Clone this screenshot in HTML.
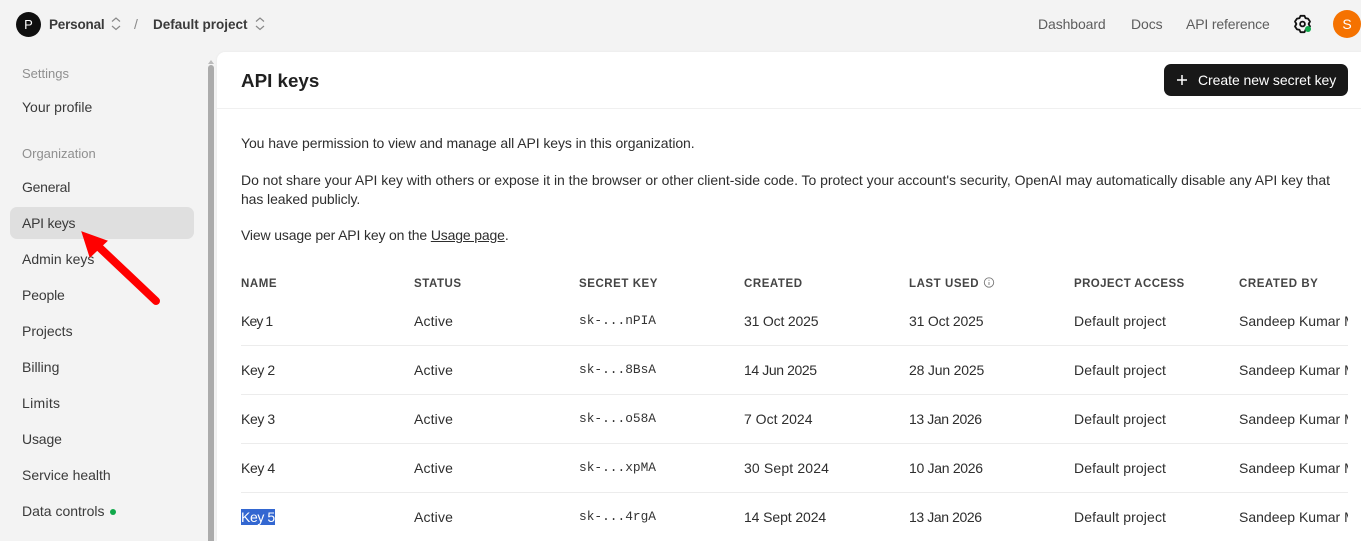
<!DOCTYPE html>
<html><head><meta charset="utf-8"><style>
*{box-sizing:border-box}
html,body{margin:0;padding:0;width:1361px;height:541px;overflow:hidden;background:#f3f3f3;font-family:"Liberation Sans",sans-serif;color:#2e2e2e;font-size:14px}
.t{position:absolute;white-space:nowrap;line-height:20px}
.side{color:#3a3a3a}
.mut{color:#8f8f8f}
.top{color:#5d5d5d}
.h{font-size:11.5px;font-weight:700;letter-spacing:.55px;color:#444}
.m{font-family:"Liberation Mono",monospace;font-size:12.83px;color:#333}
.d{letter-spacing:-.18px}
.p{letter-spacing:.12px}
.a{letter-spacing:.15px}
.k{letter-spacing:-.4px}
.s{left:1239px;width:109px;overflow:hidden}
.hr{position:absolute;left:241px;width:1107px;height:1px;background:#ececec}
</style></head><body>
<div style="position:absolute;left:16px;top:12px;width:25px;height:25px;border-radius:50%;background:#0f0f0f;color:#fff;font-size:13px;text-align:center;line-height:25px">P</div>
<div class="t" style="left:49px;top:15px;font-weight:700;color:#3a3a3a;font-size:13.5px;letter-spacing:-.2px">Personal</div>
<svg style="position:absolute;left:109px;top:15px" width="14" height="17" viewBox="0 0 14 17" fill="none" stroke="#888" stroke-width="1.2"><path d="M3 6.500 7 3l4 3.500M3 11 7 14.500 11 11"/></svg>
<div class="t" style="left:134px;top:14px;color:#888">/</div>
<div class="t" style="left:153px;top:15px;font-weight:700;color:#3a3a3a;font-size:13.5px">Default project</div>
<svg style="position:absolute;left:253px;top:15px" width="14" height="17" viewBox="0 0 14 17" fill="none" stroke="#888" stroke-width="1.2"><path d="M3 6.500 7 3l4 3.500M3 11 7 14.500 11 11"/></svg>
<div class="t top" style="left:1038px;top:14px;letter-spacing:-.1px">Dashboard</div>
<div class="t top" style="left:1131px;top:14px;letter-spacing:-.1px">Docs</div>
<div class="t top" style="left:1186px;top:14px;letter-spacing:-.15px">API reference</div>
<svg style="position:absolute;left:1293px;top:14px" width="20" height="20" viewBox="0 0 20 20" fill="none" stroke="#111" stroke-width="1.8"><path d="M7.500 1.800h4l1 2.400 2.500.4 2 2.900-1.400 2.500 1.400 2.500-2 2.900-2.500.4-1 2.400h-4l-1-2.400-2.500-.4-2-2.900 1.400-2.500-1.400-2.500 2-2.900 2.500-.4z" stroke-linejoin="round"/><circle cx="9.500" cy="10" r="2.400"/><circle cx="15" cy="15" r="3" fill="#10a84a" stroke="none"/></svg>
<div style="position:absolute;left:1333px;top:10px;width:28px;height:28px;border-radius:50%;background:#f57200;color:#fff;font-size:14px;text-align:center;line-height:28px">S</div>

<div class="t mut" style="left:22px;top:64px;font-size:13px">Settings</div>
<div class="t side" style="left:22px;top:97px">Your profile</div>
<div class="t mut" style="left:22px;top:144px;font-size:13px">Organization</div>
<div class="t side" style="left:22px;top:177px;letter-spacing:-.25px">General</div>
<div style="position:absolute;left:10px;top:207px;width:184px;height:32px;border-radius:7px;background:#dfdfdf"></div>
<div class="t side" style="left:22px;top:213px;letter-spacing:-.25px">API keys</div>
<div class="t side" style="left:22px;top:249px">Admin keys</div>
<div class="t side" style="left:22px;top:285px;letter-spacing:-.15px">People</div>
<div class="t side" style="left:22px;top:321px">Projects</div>
<div class="t side" style="left:22px;top:357px">Billing</div>
<div class="t side" style="left:22px;top:393px;letter-spacing:.3px">Limits</div>
<div class="t side" style="left:22px;top:429px;letter-spacing:-.15px">Usage</div>
<div class="t side" style="left:22px;top:465px">Service health</div>
<div class="t side" style="left:22px;top:501px">Data controls</div>
<div style="position:absolute;left:110px;top:509px;width:6px;height:6px;border-radius:50%;background:#10a84a"></div>

<div style="position:absolute;left:208px;top:65px;width:6px;height:476px;background:#ababab;border-radius:3px 3px 0 0"></div>
<div style="position:absolute;left:208px;top:57px;width:0;height:0;border:3px solid transparent;border-bottom:4px solid #bbb"></div>

<div style="position:absolute;left:217px;top:52px;width:1144px;height:489px;background:#fff;border-top-left-radius:8px;box-shadow:0 0 2px #e6e6e6"></div>
<div style="position:absolute;left:217px;top:108px;width:1144px;height:1px;background:#f0f0f0"></div>
<div class="t" style="left:241px;top:71px;font-size:18.8px;font-weight:700;color:#202020">API keys</div>
<div style="position:absolute;left:1164px;top:64px;width:184px;height:32px;border-radius:7px;background:#181818"></div>
<svg style="position:absolute;left:1174px;top:72px" width="16" height="16" viewBox="0 0 16 16" stroke="#fff" stroke-width="1.5"><path d="M8 3v10M3 8h10"/></svg>
<div class="t" style="left:1198px;top:70px;color:#fff;letter-spacing:-.05px">Create new secret key</div>

<div class="t" style="left:241px;top:133px;letter-spacing:-.08px">You have permission to view and manage all API keys in this organization.</div>
<div class="t" style="left:241px;top:170px;letter-spacing:-.028px">Do not share your API key with others or expose it in the browser or other client-side code. To protect your account's security, OpenAI may automatically disable any API key that</div>
<div class="t" style="left:241px;top:189px;letter-spacing:-.1px">has leaked publicly.</div>
<div class="t" style="left:241px;top:225px;letter-spacing:-.15px">View usage per API key on the <span style="text-decoration:underline">Usage page</span>.</div>

<div class="t h" style="left:241px;top:274px">NAME</div>
<div class="t h" style="left:414px;top:274px">STATUS</div>
<div class="t h" style="left:579px;top:274px">SECRET KEY</div>
<div class="t h" style="left:744px;top:274px">CREATED</div>
<div class="t h" style="left:909px;top:274px">LAST USED</div>
<svg style="position:absolute;left:983px;top:277px" width="12" height="11" viewBox="0 0 12 11" fill="none" stroke="#777" stroke-width=".9"><circle cx="6" cy="5.500" r="4.700"/><path d="M6 5v3M6 2.800v1"/></svg>
<div class="t h" style="left:1074px;top:274px;letter-spacing:.4px">PROJECT ACCESS</div>
<div class="t h" style="left:1239px;top:274px">CREATED BY</div>

<div class="t k" style="left:241px;top:311px;letter-spacing:-.9px">Key 1</div><div class="t a" style="left:414px;top:311px">Active</div><div class="t m" style="left:579px;top:311px">sk-...nPIA</div><div class="t d" style="left:744px;top:311px">31 Oct 2025</div><div class="t d" style="left:909px;top:311px">31 Oct 2025</div><div class="t p" style="left:1074px;top:311px">Default project</div><div class="t s" style="top:311px">Sandeep Kumar Mishra</div>
<div class="hr" style="top:345px"></div>
<div class="t k" style="left:241px;top:360px">Key 2</div><div class="t a" style="left:414px;top:360px">Active</div><div class="t m" style="left:579px;top:360px">sk-...8BsA</div><div class="t d" style="left:744px;top:360px;letter-spacing:-.4px">14 Jun 2025</div><div class="t d" style="left:909px;top:360px">28 Jun 2025</div><div class="t p" style="left:1074px;top:360px">Default project</div><div class="t s" style="top:360px">Sandeep Kumar Mishra</div>
<div class="hr" style="top:394px"></div>
<div class="t k" style="left:241px;top:409px">Key 3</div><div class="t a" style="left:414px;top:409px">Active</div><div class="t m" style="left:579px;top:409px">sk-...o58A</div><div class="t" style="left:744px;top:409px">7 Oct 2024</div><div class="t d" style="left:909px;top:409px;letter-spacing:-.4px">13 Jan 2026</div><div class="t p" style="left:1074px;top:409px">Default project</div><div class="t s" style="top:409px">Sandeep Kumar Mishra</div>
<div class="hr" style="top:443px"></div>
<div class="t k" style="left:241px;top:458px">Key 4</div><div class="t a" style="left:414px;top:458px">Active</div><div class="t m" style="left:579px;top:458px">sk-...xpMA</div><div class="t" style="left:744px;top:458px;letter-spacing:.15px">30 Sept 2024</div><div class="t d" style="left:909px;top:458px;letter-spacing:-.3px">10 Jan 2026</div><div class="t p" style="left:1074px;top:458px">Default project</div><div class="t s" style="top:458px">Sandeep Kumar Mishra</div>
<div class="hr" style="top:492px"></div>
<div style="position:absolute;left:241px;top:509px;width:34px;height:16px;background:#3367d1"></div>
<div class="t k" style="left:241px;top:507px;color:#fff">Key 5</div><div class="t a" style="left:414px;top:507px">Active</div><div class="t m" style="left:579px;top:507px">sk-...4rgA</div><div class="t" style="left:744px;top:507px;letter-spacing:-.1px">14 Sept 2024</div><div class="t d" style="left:909px;top:507px;letter-spacing:-.4px">13 Jan 2026</div><div class="t p" style="left:1074px;top:507px">Default project</div><div class="t s" style="top:507px">Sandeep Kumar Mishra</div>

<svg style="position:absolute;left:0;top:0" width="1361" height="541" fill="none"><path d="M156 301 100 248" stroke="#f00" stroke-width="8" stroke-linecap="round"/><path d="M82 232 107 241 90 257Z" fill="#f00" stroke="#f00" stroke-width="1"/></svg>
</body></html>
